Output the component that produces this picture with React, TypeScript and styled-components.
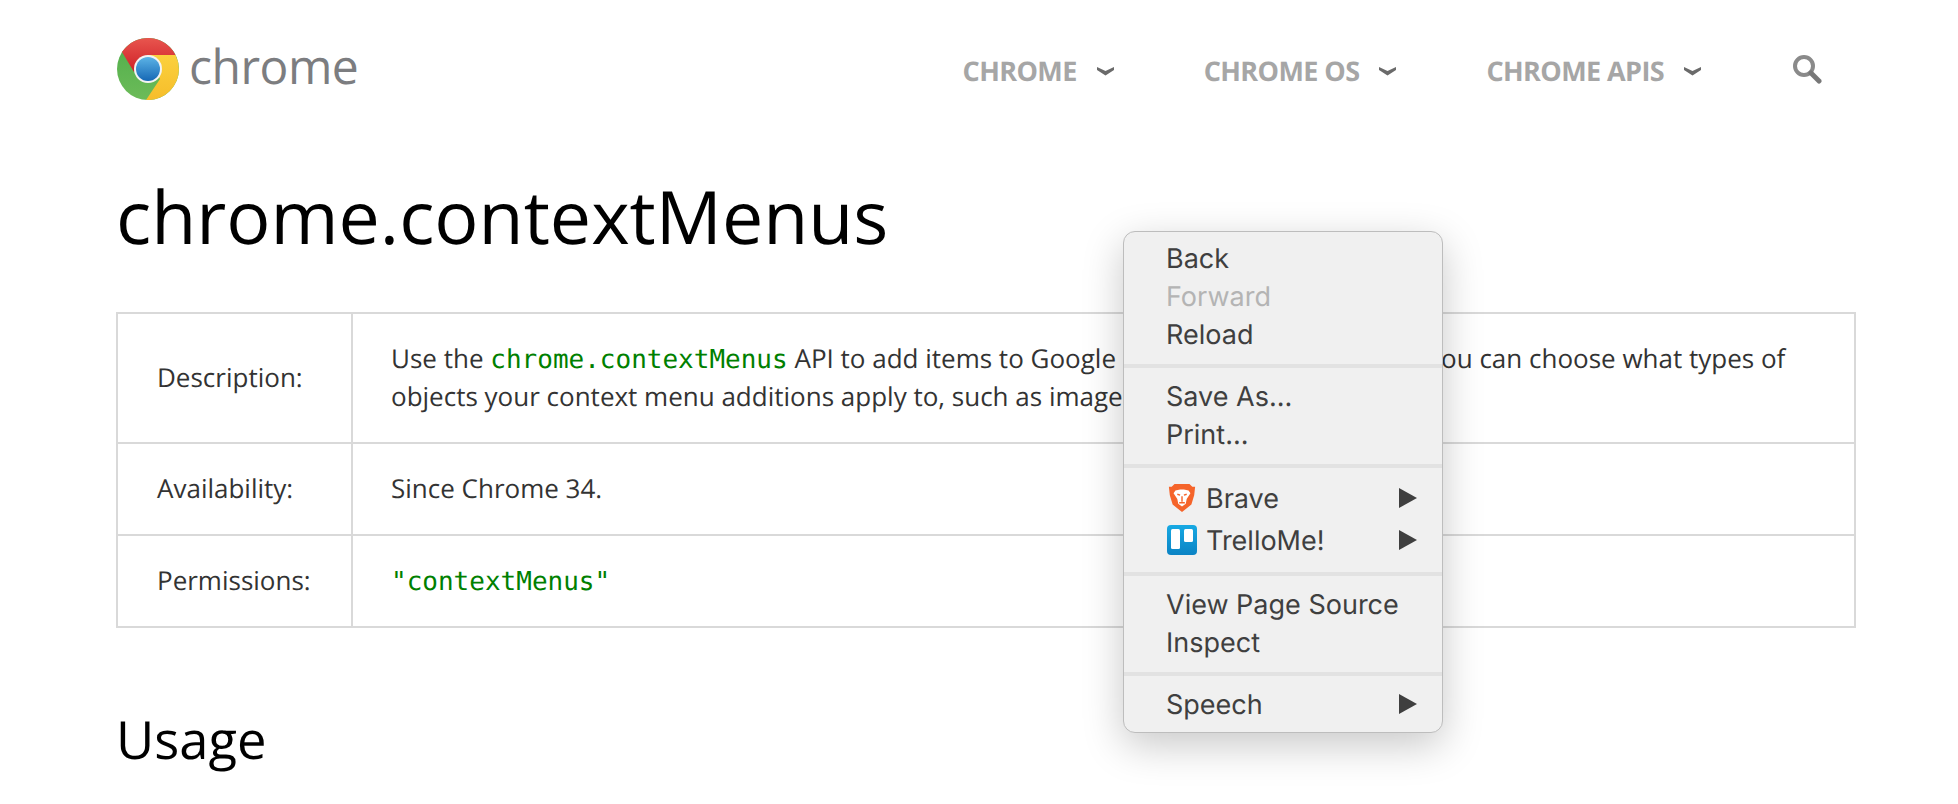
import React from 'react'
import styled, { createGlobalStyle } from 'styled-components'

const GlobalStyle = createGlobalStyle`
  html, body { margin: 0; padding: 0; background: #fff; height: 804px; overflow: hidden; }
  body { font-family: "Open Sans", sans-serif; color: #333; text-rendering: geometricPrecision; }
`

const Page = styled.div`
  position: relative;
  width: 1958px;
  height: 804px;
  overflow: hidden;
  padding: 0 102px 0 116px;
  box-sizing: border-box;
`

const Header = styled.header`
  display: flex;
  align-items: center;
  justify-content: space-between;
  height: 138px;
`

const Logo = styled.a`
  display: flex;
  align-items: center;
  gap: 10px;
  margin-left: 1px;
  font-size: 48px;
  font-weight: 400;
  color: #7c7d80;
  letter-spacing: -0.5px;
  span { margin-bottom: 5px; }
`

const Nav = styled.nav`
  display: flex;
  align-items: center;
  padding-right: 34px;
  padding-top: 3px;
`

const NavItem = styled.a`
  display: flex;
  align-items: center;
  gap: 19px;
  margin-right: 89px;
  font-size: 27px;
  font-weight: 700;
  color: #a6a6a6;
  letter-spacing: -0.6px;
`

const SearchIcon = styled.svg`
  width: 30px;
  height: 30px;
  margin: -4px 0 0 1px;
`

const Title = styled.h1`
  margin: 40px 0 0;
  font-size: 73.5px;
  line-height: 76px;
  font-weight: 400;
  color: #000;
`

const InfoTable = styled.table`
  margin-top: 58px;
  width: 1740px;
  border-collapse: collapse;
  font-size: 26px;
  line-height: 37.5px;
  color: #333;
  td {
    border: 2px solid #d9d9d9;
    padding: 0 39px 1px;
  }
  td:first-child { width: 155px; }
  td:last-child { padding-left: 38px; }
`

const Row = styled.tr<{ $height: number }>`
  height: ${p => p.$height}px;
`

const Code = styled.code`
  font-family: "DejaVu Sans Mono", monospace;
  font-size: 26px;
  line-height: 1;
  color: #008000;
`

const SubTitle = styled.h2`
  margin: 82px 0 0;
  font-size: 52.5px;
  line-height: 60px;
  font-weight: 400;
  color: #000;
`

const Menu = styled.div`
  position: absolute;
  left: 1123px;
  top: 231px;
  width: 320px;
  height: 502px;
  box-sizing: border-box;
  padding: 7px 0;
  background: #f0f0f0;
  border: 1px solid #bdbdbd;
  border-radius: 12px;
  box-shadow: 0 12px 40px rgba(0, 0, 0, 0.22);
  font-family: Inter, sans-serif;
  font-size: 27px;
  color: #3f3f3f;
`

const MenuItem = styled.div<{ $disabled?: boolean; $withIcon?: boolean }>`
  display: flex;
  align-items: center;
  height: ${p => (p.$withIcon ? 42 : 38)}px;
  padding: 0 25px 0 42px;
  color: ${p => (p.$disabled ? '#b4b4b4' : '#3f3f3f')};
`

const MenuIcon = styled.svg`
  width: 30px;
  height: 30px;
  margin: 0 9px 0 1px;
`

const Arrow = styled.span`
  margin-left: auto;
  width: 0;
  height: 0;
  border-left: 18px solid #3f3f3f;
  border-top: 10px solid transparent;
  border-bottom: 10px solid transparent;
`

const Separator = styled.div`
  height: 4px;
  margin: 11px 0 9px;
  background: #e2e2e2;
`

const Chevron = () => (
  <svg width="19" height="12" viewBox="0 0 19 12">
    <path d="M1 2 L9.5 6 L18 2 L18 5 L9.5 10.5 L1 5 Z" fill="#6a6a6a" />
  </svg>
)

const ChromeLogo = () => (
  <svg width="62" height="62" viewBox="0 0 62 62">
    <defs>
      <linearGradient id="chromeRed" x1="0" y1="0" x2="0" y2="1">
        <stop offset="0" stopColor="#e8554e" />
        <stop offset="1" stopColor="#cf2027" />
      </linearGradient>
      <linearGradient id="chromeGreen" x1="0" y1="0" x2="0" y2="1">
        <stop offset="0" stopColor="#4fae4a" />
        <stop offset="1" stopColor="#6cbb59" />
      </linearGradient>
      <linearGradient id="chromeYellow" x1="0" y1="0" x2="0" y2="1">
        <stop offset="0" stopColor="#fbd13d" />
        <stop offset="1" stopColor="#f6bd2b" />
      </linearGradient>
      <linearGradient id="chromeBlue" x1="0" y1="0" x2="0" y2="1">
        <stop offset="0" stopColor="#5cb3e6" />
        <stop offset="1" stopColor="#1668b5" />
      </linearGradient>
    </defs>
    <circle cx="31" cy="31" r="31" fill="url(#chromeGreen)" />
    <path d="M5 14 A31 31 0 0 1 58.5 17 L31 17 L17 34 Z" fill="url(#chromeRed)" />
    <path d="M58.5 17 A31 31 0 0 1 29 62 L43 41 L31 17 Z" fill="url(#chromeYellow)" />
    <circle cx="31" cy="31" r="14" fill="#f3f3f3" />
    <circle cx="31" cy="31" r="12" fill="url(#chromeBlue)" />
  </svg>
)

const BraveIcon = () => (
  <MenuIcon viewBox="0 0 30 32">
    <path d="M7 1 H23 L26 4 L29 4 L28 13 L25 23 L15 31 L5 23 L2 13 L1 4 L4 4 Z" fill="#f5642a" />
    <path d="M8 8 L13 7 H17 L22 8 L24 11 L20 17 L19 22 L15 25 L11 22 L10 17 L6 11 Z" fill="#fff" />
    <path d="M10 12 L13 13 M20 12 L17 13 M15 14 V20 M12 21 H18" stroke="#f5642a" strokeWidth="1.5" fill="none" />
  </MenuIcon>
)

const TrelloIcon = () => (
  <MenuIcon viewBox="0 0 30 30">
    <defs>
      <linearGradient id="trelloBlue" x1="0" y1="0" x2="0" y2="1">
        <stop offset="0" stopColor="#17a9e3" />
        <stop offset="1" stopColor="#0b83c4" />
      </linearGradient>
    </defs>
    <rect width="30" height="30" rx="4" fill="url(#trelloBlue)" />
    <rect x="4" y="4" width="9" height="20" rx="1.5" fill="#fff" />
    <rect x="17" y="4" width="9" height="13" rx="1.5" fill="#fff" />
  </MenuIcon>
)

export default function App() {
  return (
    <Page>
      <GlobalStyle />
      <Header>
        <Logo>
          <ChromeLogo />
          <span>chrome</span>
        </Logo>
        <Nav>
          <NavItem>CHROME <Chevron /></NavItem>
          <NavItem>CHROME OS <Chevron /></NavItem>
          <NavItem>CHROME APIS <Chevron /></NavItem>
          <SearchIcon viewBox="0 0 30 30">
            <circle cx="12" cy="12" r="9" fill="none" stroke="#8a8a8a" strokeWidth="4" />
            <path d="M19 19 L27 27" stroke="#777" strokeWidth="5" strokeLinecap="round" />
          </SearchIcon>
        </Nav>
      </Header>
      <Title>chrome.contextMenus</Title>
      <InfoTable>
        <tbody>
          <Row $height={130}>
            <td>Description:</td>
            <td>
              Use the <Code>chrome.contextMenus</Code> API to add items to Google Chrome's context menu. You can choose what types of
              objects your context menu additions apply to, such as images, hyperlinks, and pages.
            </td>
          </Row>
          <Row $height={92}>
            <td>Availability:</td>
            <td>Since Chrome 34.</td>
          </Row>
          <Row $height={92}>
            <td>Permissions:</td>
            <td><Code>"contextMenus"</Code></td>
          </Row>
        </tbody>
      </InfoTable>
      <SubTitle>Usage</SubTitle>
      <Menu>
        <MenuItem>Back</MenuItem>
        <MenuItem $disabled>Forward</MenuItem>
        <MenuItem>Reload</MenuItem>
        <Separator />
        <MenuItem>Save As...</MenuItem>
        <MenuItem>Print...</MenuItem>
        <Separator />
        <MenuItem $withIcon><BraveIcon />Brave<Arrow /></MenuItem>
        <MenuItem $withIcon><TrelloIcon />TrelloMe!<Arrow /></MenuItem>
        <Separator />
        <MenuItem>View Page Source</MenuItem>
        <MenuItem>Inspect</MenuItem>
        <Separator />
        <MenuItem>Speech<Arrow /></MenuItem>
      </Menu>
    </Page>
  )
}
